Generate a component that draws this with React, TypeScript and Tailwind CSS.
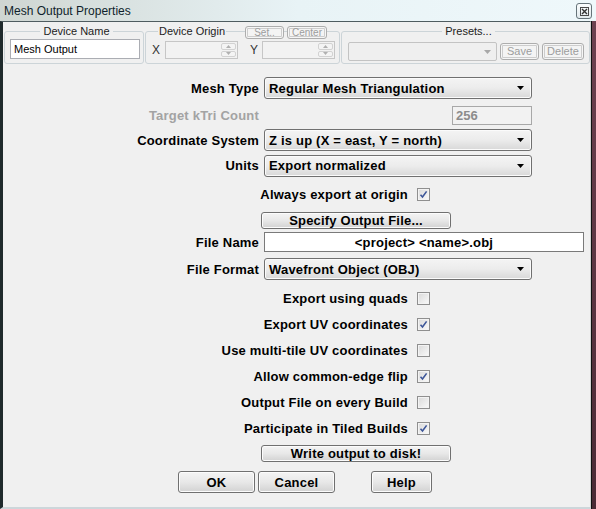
import React from 'react';

const font = "font-['Liberation_Sans',Arial,sans-serif]";

function DownArrow({ color = '#000' }: { color?: string }) {
  return (
    <svg width="7" height="4" viewBox="0 0 7 4">
      <path d="M0 0h7L3.5 4z" fill={color} />
    </svg>
  );
}

function Select({ value, w = 'w-[268px]' }: { value: string; w?: string }) {
  return (
    <div
      className={`${w} h-[22px] flex items-center justify-between pl-[4px] pr-[7px] border border-[#707070] rounded-[3px] bg-gradient-to-b from-[#f4f4f4] via-[#ececec] to-[#d8d8d8] shadow-[inset_0_0_0_1px_#fbfbfb] font-bold text-[13px] tracking-[0.2px] leading-none`}
    >
      <span>{value}</span>
      <DownArrow />
    </div>
  );
}

function Check({ checked }: { checked?: boolean }) {
  return (
    <span className="w-[13px] h-[13px] border border-[#8f8f8f] bg-gradient-to-br from-[#d9d9d9] to-[#fafafa] shadow-[inset_0_0_0_1px_#f3f3f3] flex items-center justify-center">
      {checked && (
        <svg width="9" height="9" viewBox="0 0 9 9">
          <path d="M1.5 4.8l2 2.2L7.6 1.4" stroke="#3c5598" strokeWidth="1.6" fill="none" />
        </svg>
      )}
    </span>
  );
}

function Button({ children, w }: { children: React.ReactNode; w: string }) {
  return (
    <button
      className={`${w} h-full border border-[#707070] rounded-[3px] bg-gradient-to-b from-[#f4f4f4] via-[#e8e8e8] to-[#d2d2d2] shadow-[inset_0_0_0_1px_#fcfcfc] font-bold text-[13px] tracking-[0.2px] leading-none text-black`}
    >
      {children}
    </button>
  );
}

function DisabledButton({ children, w, h }: { children: React.ReactNode; w: string; h: string }) {
  return (
    <span
      className={`${w} ${h} flex items-center justify-center border border-[#adadad] rounded-[3px] bg-[#f4f4f4] shadow-[inset_0_0_0_1px_#f6f6f6,inset_0_0_0_2px_#cdcdcd] text-[#9d9d9d] leading-none`}
    >
      {children}
    </span>
  );
}

function Spin() {
  return (
    <div className="w-[73px] h-[18px] border border-[#c6c6c6] bg-[#f2f2f2] flex justify-end p-[1px]">
      <div className="w-[15px] flex flex-col gap-[1px]">
        <div className="flex-1 border border-[#d2d2d2] rounded-[2px] bg-[#f4f4f4] flex items-center justify-center">
          <svg width="5" height="3" viewBox="0 0 5 3">
            <path d="M0 3h5L2.5 0z" fill="#b0b0b0" />
          </svg>
        </div>
        <div className="flex-1 border border-[#d2d2d2] rounded-[2px] bg-[#f4f4f4] flex items-center justify-center">
          <svg width="5" height="3" viewBox="0 0 5 3">
            <path d="M0 0h5L2.5 3z" fill="#b0b0b0" />
          </svg>
        </div>
      </div>
    </div>
  );
}

function Label({ children, dim, w = 'w-[256px]' }: { children: React.ReactNode; dim?: boolean; w?: string }) {
  return (
    <span className={`${w} shrink-0 text-right font-bold text-[13px] tracking-[0.2px] leading-none ${dim ? 'text-[#a3a3a3]' : 'text-black'}`}>
      {children}
    </span>
  );
}

function CheckRow({ label, checked }: { label: string; checked?: boolean }) {
  return (
    <div className="h-[26px] flex items-center gap-[9px]">
      <Label w="w-[405px]">{label}</Label>
      <Check checked={checked} />
    </div>
  );
}

export default function App() {
  const checks = [
    { label: 'Export using quads', checked: false },
    { label: 'Export UV coordinates', checked: true },
    { label: 'Use multi-tile UV coordinates', checked: false },
    { label: 'Allow common-edge flip', checked: true },
    { label: 'Output File on every Build', checked: false },
    { label: 'Participate in Tiled Builds', checked: true },
  ];

  return (
    <div className={`w-[596px] h-[509px] flex flex-col bg-[#eef7fa] overflow-hidden ${font}`}>
      {/* Title bar */}
      <div className="h-[21px] shrink-0 flex items-center justify-between pl-[4px] pr-[4px] bg-gradient-to-r from-[#cfd6d2] via-[#e8f3f6] to-[#eff8fb]">
        <span className="text-[12px] text-[#0f1f2b] leading-none">Mesh Output Properties</span>
        <span className="w-[16px] h-[16px] mt-[1px] border border-[#66747a] rounded-[3px] bg-gradient-to-b from-[#fbfdfe] to-[#e2eaed] flex items-center justify-center">
          <svg width="9" height="9" viewBox="0 0 9 9">
            <rect x="0.5" y="0.5" width="8" height="8" fill="none" stroke="#4a4a4a" />
            <path d="M2 2l5 5M7 2l-5 5" stroke="#333" strokeWidth="1.4" />
          </svg>
        </span>
      </div>

      <div className="flex flex-1">
        <div className="w-[591px] flex flex-col bg-[#f0f0f0] border-l-[3px] border-l-[#1f2a2c] border-t border-t-[#4f5c60] border-r border-r-[#d2d2d2] border-b-2 border-b-[#cdd6da]">
          {/* Group boxes */}
          <div className="flex gap-[1px] pl-[1px] pt-[3px]">
            <fieldset className="w-[140px] h-[39px] border border-[#ccd4d8] rounded-[3px] pl-[5px] pt-[1px]">
              <legend className="mx-auto px-[3px] text-[11px] leading-[13px] text-[#222]">Device Name</legend>
              <div className="w-[130px] h-[20px] border border-[#abadb3] bg-white flex items-center pl-[3px] text-[11px] leading-none">
                Mesh Output
              </div>
            </fieldset>

            <div className="relative">
              <fieldset className="w-[195px] h-[39px] border border-[#ccd4d8] rounded-[3px] pl-[6px] pt-[3px]">
                <legend className="ml-[6px] px-[1px] text-[11px] leading-[13px] text-[#222]">Device Origin</legend>
                <div className="flex items-center text-[12px] text-[#333] leading-none">
                  <span className="w-[13px]">X</span>
                  <Spin />
                  <span className="w-[24px] pl-[12px]">Y</span>
                  <Spin />
                </div>
              </fieldset>
              <div className="absolute left-[100px] top-[1px] flex gap-[3px] text-[10px]">
                <DisabledButton w="w-[39px]" h="h-[13px]">Set..</DisabledButton>
                <DisabledButton w="w-[40px]" h="h-[13px]">Center</DisabledButton>
              </div>
            </div>

            <fieldset className="w-[249px] h-[39px] border border-[#ccd4d8] rounded-[3px] pl-[6px] pt-[4px]">
              <legend className="mx-auto px-[3px] text-[11px] leading-[13px] text-[#222]">Presets...</legend>
              <div className="flex items-center gap-[3px] text-[11px]">
                <div className="w-[149px] h-[19px] border border-[#c3c3c3] rounded-[2px] bg-[#efefef] flex items-center justify-end pr-[5px]">
                  <DownArrow color="#a8a8a8" />
                </div>
                <DisabledButton w="w-[39px]" h="h-[17px]">Save</DisabledButton>
                <DisabledButton w="w-[42px]" h="h-[17px]">Delete</DisabledButton>
              </div>
            </fieldset>
          </div>

          {/* Main form */}
          <div className="flex flex-col mt-[11px]">
            <div className="h-[26px] flex items-center gap-[5px]">
              <Label>Mesh Type</Label>
              <Select value="Regular Mesh Triangulation" />
            </div>
            <div className="h-[28px] flex items-center">
              <Label dim>Target kTri Count</Label>
              <div className="ml-[193px] w-[80px] h-[19px] border border-[#a8a8a8] bg-[#f2f2f2] flex items-center pl-[3px] font-bold text-[13px] text-[#8c8c8c] leading-none">
                256
              </div>
            </div>
            <div className="h-[22px] flex items-center gap-[5px]">
              <Label>Coordinate System</Label>
              <Select value="Z is up (X = east, Y = north)" />
            </div>
            <div className="h-[29px] flex items-center gap-[5px]">
              <Label>Units</Label>
              <Select value="Export normalized" />
            </div>
            <div className="h-[28px] flex items-center gap-[9px]">
              <Label w="w-[405px]">Always export at origin</Label>
              <Check checked />
            </div>
            <div className="h-[24px] flex items-center pl-[258px]">
              <div className="h-[17px] flex">
                <Button w="w-[190px]">Specify Output File...</Button>
              </div>
            </div>
            <div className="h-[20px] flex items-center gap-[5px]">
              <Label>File Name</Label>
              <div className="w-[320px] h-[20px] border border-[#7a7a7a] bg-white flex items-center justify-center font-bold text-[13px] tracking-[0.2px] leading-none">
                {'<project> <name>.obj'}
              </div>
            </div>
            <div className="h-[33px] flex items-start pt-[6px] gap-[5px]">
              <span className="h-[23px] flex items-center">
                <Label>File Format</Label>
              </span>
              <div className="h-[23px] flex">
                <Select value="Wavefront Object (OBJ)" />
              </div>
            </div>
            {checks.map((c) => (
              <CheckRow key={c.label} label={c.label} checked={c.checked} />
            ))}
            <div className="h-[25px] flex items-center pl-[258px]">
              <div className="h-[17px] flex">
                <Button w="w-[190px]">Write output to disk!</Button>
              </div>
            </div>
            <div className="h-[22px] mt-[5px] flex pl-[175px]">
              <Button w="w-[77px]">OK</Button>
              <span className="w-[3px]" />
              <Button w="w-[77px]">Cancel</Button>
              <span className="w-[36px]" />
              <Button w="w-[61px]">Help</Button>
            </div>
          </div>
        </div>
        <div className="flex-1 border-l border-l-[#111] bg-gradient-to-b from-[#6e4150] to-[#4a2a35]" />
      </div>
    </div>
  );
}
